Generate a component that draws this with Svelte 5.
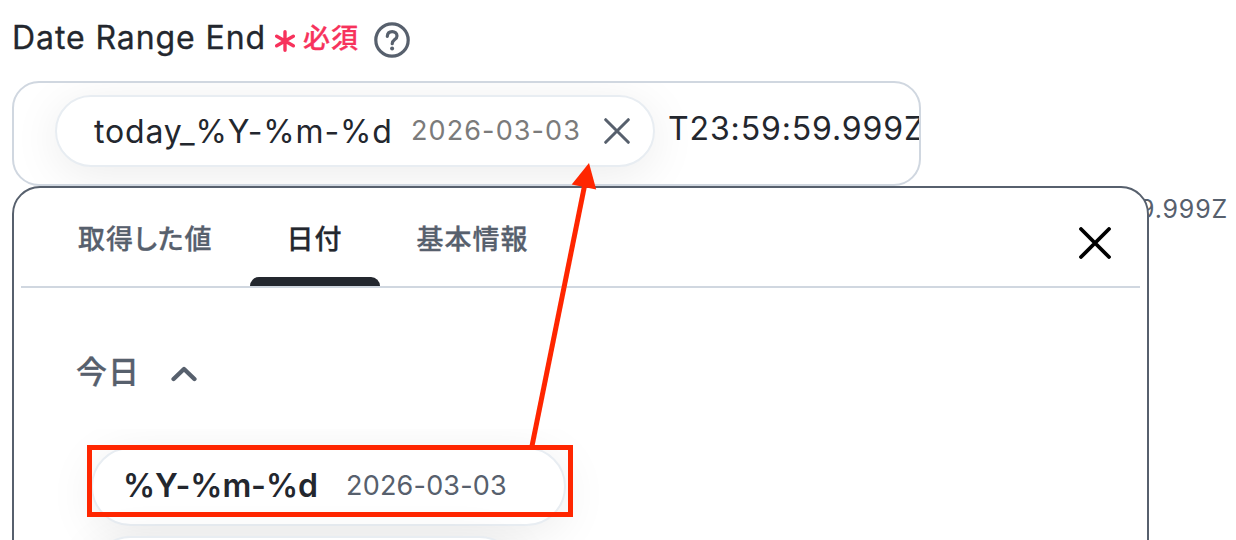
<script lang="ts">
  let tabs = ['取得した値', '日付', '基本情報'];
  let activeTab = $state('日付');
  let open = $state(true);
  let today = '2026-03-03';
</script>

<div class="page">
  <div class="label-row">
    <span class="label">Date Range End</span>
    <svg class="asterisk" viewBox="0 0 20 22">
      <path d="M10 1.8v18.4M1.7 6.2l16.6 9.6M18.3 6.2L1.7 15.8" />
    </svg>
    <span class="required">必須</span>
    <svg class="help" viewBox="0 0 36 36">
      <circle cx="18" cy="18" r="16.2" />
      <path d="M13.3 14.4c.2-3 2.1-4.8 4.9-4.8 2.7 0 4.8 1.7 4.8 4.3 0 3.8-4.8 3.6-4.8 7.8" />
      <circle class="dot" cx="18.1" cy="26.6" r="2" />
    </svg>
  </div>

  <div class="field">
    <div class="token">
      <span class="token-name">today_%Y-%m-%d</span>
      <span class="token-value">{today}</span>
      <svg class="remove" viewBox="0 0 26 26">
        <path d="M1.7 1.7l22.6 22.6M24.3 1.7L1.7 24.3" />
      </svg>
    </div>
    <span class="suffix">T23:59:59.999Z</span>
  </div>

  <div class="below">
    <div class="preview">9.999Z</div>

    <div class="panel">
      <div class="tabs">
        {#each tabs as tab}
          <button class="tab" class:active={tab === activeTab} onclick={() => (activeTab = tab)}>{tab}</button>
        {/each}
        <button class="close" aria-label="close">
          <svg viewBox="0 0 32 32">
            <path d="M2 2l28 28M30 2L2 30" />
          </svg>
        </button>
      </div>

      <button class="group" onclick={() => (open = !open)}>
        <span>今日</span>
        <svg viewBox="0 0 26 16">
          <path d="M2.6 13L13 3l10.400 10" />
        </svg>
      </button>

      {#if open}
        <div class="options">
          <div class="option">
            <span class="format">%Y-%m-%d</span>
            <span class="example">{today}</span>
          </div>
          <div class="option short"></div>
        </div>
      {/if}
    </div>
  </div>

  <svg class="annotation" viewBox="0 0 1236 540">
    <rect x="89.500" y="447.500" width="481" height="67" />
    <path class="line" d="M532 446L584.500 186" />
    <path class="head" d="M589 163L571.700 184.600L596.200 189.600z" />
  </svg>
</div>

<style>
  :global(body) {
    background: #fff;
  }

  .page {
    position: relative;
    width: 1236px;
    height: 540px;
    overflow: hidden;
    box-sizing: border-box;
    font-family: Inter, "Noto Sans CJK JP", sans-serif;
    color: #23272e;
  }

  svg {
    display: block;
    flex: none;
    fill: none;
    stroke-linecap: round;
    stroke-linejoin: round;
  }

  span,
  button {
    white-space: nowrap;
  }

  button {
    padding: 0;
    border: none;
    background: none;
    font-family: inherit;
    color: inherit;
    cursor: pointer;
  }

  .label-row {
    display: flex;
    align-items: center;
    height: 81px;
    box-sizing: border-box;
    padding: 0 0 6px 12px;
  }

  .label {
    width: 263px;
    font-size: 32px;
    letter-spacing: 0.92px;
    -webkit-text-stroke: 0.3px #23272e;
  }

  .asterisk {
    width: 20px;
    height: 22px;
    margin-top: 6px;
    stroke: #f7325c;
    stroke-width: 3.4;
  }

  .required {
    width: 56px;
    margin: -3px 0 0 8px;
    font-size: 27px;
    font-weight: 500;
    letter-spacing: 1.1px;
    color: #f7325c;
    -webkit-text-stroke: 0.3px #f7325c;
  }

  .help {
    width: 36px;
    height: 36px;
    margin: 5px 0 0 14.500px;
    stroke: #57606d;
    stroke-width: 3.2;
  }

  .help .dot {
    fill: #57606d;
    stroke: none;
  }

  .field {
    display: flex;
    align-items: flex-start;
    width: 909px;
    height: 105px;
    box-sizing: border-box;
    margin-left: 12px;
    padding: 12px 0 0 41px;
    border: 2px solid #d0d7e0;
    border-radius: 27px;
    overflow: hidden;
  }

  .token {
    display: flex;
    flex: none;
    align-items: center;
    width: 600px;
    height: 72px;
    box-sizing: border-box;
    padding-left: 37px;
    border: 2px solid #e8edf2;
    border-radius: 36px;
    background: #fff;
    box-shadow: 0 8px 48px rgba(0, 0, 0, 0.08);
  }

  .token-name {
    width: 317px;
    font-size: 32px;
    letter-spacing: 0.83px;
  }

  .token-value {
    width: 193px;
    margin-top: -1px;
    font-size: 27px;
    letter-spacing: 1.1px;
    color: #7b7b7b;
  }

  .remove {
    width: 26px;
    height: 26px;
    stroke: #57606d;
    stroke-width: 3;
  }

  .suffix {
    margin: 14px 0 0 13px;
    font-size: 32px;
    line-height: 39px;
    letter-spacing: 0.87px;
  }

  .below {
    position: relative;
  }

  .preview {
    padding-top: 7px;
    margin-right: 8px;
    text-align: right;
    font-size: 25px;
    line-height: 32px;
    letter-spacing: 0.8px;
    color: #57606d;
  }

  /* the menu opens over the preview line */
  .panel {
    position: absolute;
    top: 0;
    left: 12px;
    width: 1137px;
    height: 400px;
    box-sizing: border-box;
    padding: 0 7px;
    border: 2px solid #57606d;
    border-radius: 28px;
    background: #fff;
  }

  .tabs {
    display: flex;
    height: 100px;
    box-sizing: border-box;
    padding: 0 29px 0 20px;
    border-bottom: 2px solid #d0d7e0;
  }

  .tab {
    position: relative;
    padding: 1px 37px 0;
    font-size: 27px;
    font-weight: 500;
    font-feature-settings: 'palt';
    letter-spacing: 1px;
    color: #57606d;
    -webkit-text-stroke: 0.3px;
  }

  .tab.active {
    color: #23272e;
  }

  .tab.active::after {
    content: '';
    position: absolute;
    right: 0;
    bottom: 0;
    left: 0;
    height: 9px;
    border-radius: 9px 9px 0 0;
    background: #23272e;
  }

  .close {
    margin: 11px 0 0 auto;
  }

  .close svg {
    width: 32px;
    height: 32px;
    stroke: #000;
    stroke-width: 3.8;
  }

  .group {
    display: flex;
    align-items: center;
    height: 141px;
    padding: 21px 0 0 55px;
    font-size: 31px;
    font-weight: 500;
    letter-spacing: 1.1px;
    color: #57606d;
    -webkit-text-stroke: 0.3px;
  }

  .group svg {
    width: 26px;
    height: 16px;
    margin: 9px 0 0 31px;
    stroke: #57606d;
    stroke-width: 4.4;
  }

  .options {
    display: flex;
    flex-direction: column;
    gap: 10px;
    margin-left: 20px;
    padding: 18px 0 0 50px;
    overflow: hidden;
  }

  .option {
    display: flex;
    align-items: center;
    width: 475px;
    height: 79px;
    box-sizing: border-box;
    padding-left: 30px;
    border: 2px solid #e8edf2;
    border-radius: 40px;
    background: #fff;
    box-shadow: 0 8px 48px rgba(0, 0, 0, 0.08);
  }

  .option.short {
    width: 428px;
  }

  .format {
    width: 223px;
    margin-top: -2px;
    font-size: 32px;
    font-weight: 600;
    letter-spacing: -0.1px;
  }

  .example {
    margin-top: -3px;
    font-size: 27px;
    letter-spacing: 0.2px;
    color: #57606d;
  }

  .annotation {
    position: absolute;
    inset: 0;
    width: 1236px;
    height: 540px;
    pointer-events: none;
    stroke: #ff2600;
    stroke-width: 5;
    stroke-linejoin: miter;
    stroke-linecap: butt;
  }

  .annotation .head {
    fill: #ff2600;
    stroke: none;
  }
</style>
